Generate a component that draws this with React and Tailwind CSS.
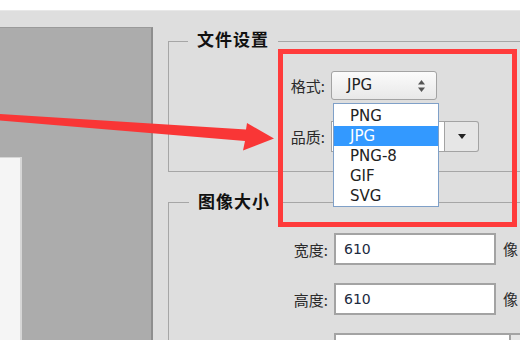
import React from "react";

const FONT = { fontFamily: '"DejaVu Sans", "Noto Sans CJK SC", sans-serif' };

function Label({ children }) {
  return (
    <div className="w-[46px] pr-[6px] text-right text-[15px] leading-none text-[#2a2a2a]" style={{ fontFamily: '"Noto Sans CJK SC", sans-serif' }}>
      {children}
    </div>
  );
}

function TextInput({ value, w }) {
  return (
    <div className={`${w} h-[32px] bg-white border-2 border-[#a3a3a3] flex items-center pl-[8px] text-[14px] text-[#1c2a3e]`}>
      {value}
    </div>
  );
}

export default function App() {
  const items = ["PNG", "JPG", "PNG-8", "GIF", "SVG"];
  return (
    <div className="w-[520px] h-[340px] relative overflow-hidden bg-[#dedede]" style={FONT}>
      <div className="h-[11px] bg-white border-b border-[#e8e8e8]" />
      <div className="flex h-[329px] overflow-hidden">
        {/* left preview panel */}
        <div className="mt-[16px] w-[153px] bg-[#acacac] border-t border-r-2 border-t-[#9a9a9a] border-r-[#8e8e8e] flex flex-col justify-end shrink-0">
          <div className="h-[183px] w-[22px] bg-[#f5f5f5] border-t border-r-2 border-[#d6d6d6]" />
        </div>
        {/* settings */}
        <div className="ml-[15px] flex flex-col shrink-0 w-[420px]">
          {/* fieldset 1 */}
          <div className="mt-[30px] relative h-[131px] shrink-0 border-l border-t border-b border-[#a6a6a6]">
            <div className="absolute left-[19px] top-[-13px] px-[9px] bg-[#dedede] text-[17px] font-bold tracking-[1px] leading-[20px] text-[#111]" style={{ fontFamily: '"Noto Sans CJK SC", sans-serif' }}>
              文件设置
            </div>
            <div className="pl-[116px] pt-[29px] flex flex-col gap-[21px]">
              <div className="flex items-center h-[29px]">
                <Label>格式:</Label>
                <div className="w-[106px] h-[29px] rounded-[3px] border border-[#a3a3a3] bg-gradient-to-b from-[#fbfbfb] to-[#e8e8e8] flex items-center justify-between pl-[15px] pr-[10px] text-[15px] text-[#222]">
                  <span>JPG</span>
                  <svg width="9" height="14" viewBox="0 0 9 14">
                    <path d="M4.5 1 L8 5.5 L1 5.5 Z" fill="#555" />
                    <path d="M4.5 13 L8 8.5 L1 8.5 Z" fill="#555" />
                  </svg>
                </div>
              </div>
              <div className="flex items-center h-[31px]">
                <Label>品质:</Label>
                <div className="flex h-[31px]">
                  <div className="w-[114px] h-full bg-white border border-[#a3a3a3]" />
                  <div className="w-[34px] h-full bg-[#e6e6e6] border border-l-0 border-[#a3a3a3] rounded-r-[3px] flex items-center justify-center">
                    <svg width="8" height="5" viewBox="0 0 8 5">
                      <path d="M0 0 L8 0 L4 5 Z" fill="#222" />
                    </svg>
                  </div>
                </div>
              </div>
            </div>
          </div>
          {/* fieldset 2 */}
          <div className="mt-[30px] relative h-[200px] shrink-0 border-l border-t border-[#a6a6a6]">
            <div className="absolute left-[20px] top-[-12px] px-[9px] bg-[#dedede] text-[17px] font-bold tracking-[1px] leading-[20px] text-[#111]" style={{ fontFamily: '"Noto Sans CJK SC", sans-serif' }}>
              图像大小
            </div>
            <div className="pl-[119px] pt-[30px] flex flex-col gap-[18px]">
              <div className="flex items-center">
                <Label>宽度:</Label>
                <TextInput value="610" w="w-[162px]" />
                <span className="ml-[7px] text-[15px] text-[#2a2a2a]" style={{ fontFamily: '"Noto Sans CJK SC", sans-serif' }}>像</span>
              </div>
              <div className="flex items-center">
                <Label>高度:</Label>
                <TextInput value="610" w="w-[162px]" />
                <span className="ml-[7px] text-[15px] text-[#2a2a2a]" style={{ fontFamily: '"Noto Sans CJK SC", sans-serif' }}>像</span>
              </div>
              <div className="flex items-center">
                <Label></Label>
                <div className="w-[177px] h-[32px] bg-white border-2 border-[#a3a3a3]" />
                <div className="w-[40px] h-[32px] bg-[#e6e6e6] border-2 border-l-0 border-[#a3a3a3]" />
              </div>
            </div>
          </div>
        </div>
      </div>

      {/* open dropdown list */}
      <div className="absolute left-[333px] top-[103px] w-[106px] h-[104px] bg-white border border-[#7fa0c8] pt-[2px] text-[15px] text-[#222]">
        {items.map((it) => (
          <div
            key={it}
            className={`h-[20px] leading-[20px] pl-[16px] ${it === "JPG" ? "bg-[#3399ff] text-white" : ""}`}
          >
            {it}
          </div>
        ))}
      </div>

      {/* red highlight box */}
      <div className="absolute left-[278px] top-[49px] w-[239px] h-[178px] border-[5px] border-[#ff3b3b]" />

      {/* red arrow */}
      <svg className="absolute left-0 top-0" width="520" height="340" viewBox="0 0 520 340">
        <polygon
          points="0,114 246,129.5 247,123 274,138.5 243,150.5 245,141 0,120.5"
          fill="#f93636"
        />
      </svg>
    </div>
  );
}
